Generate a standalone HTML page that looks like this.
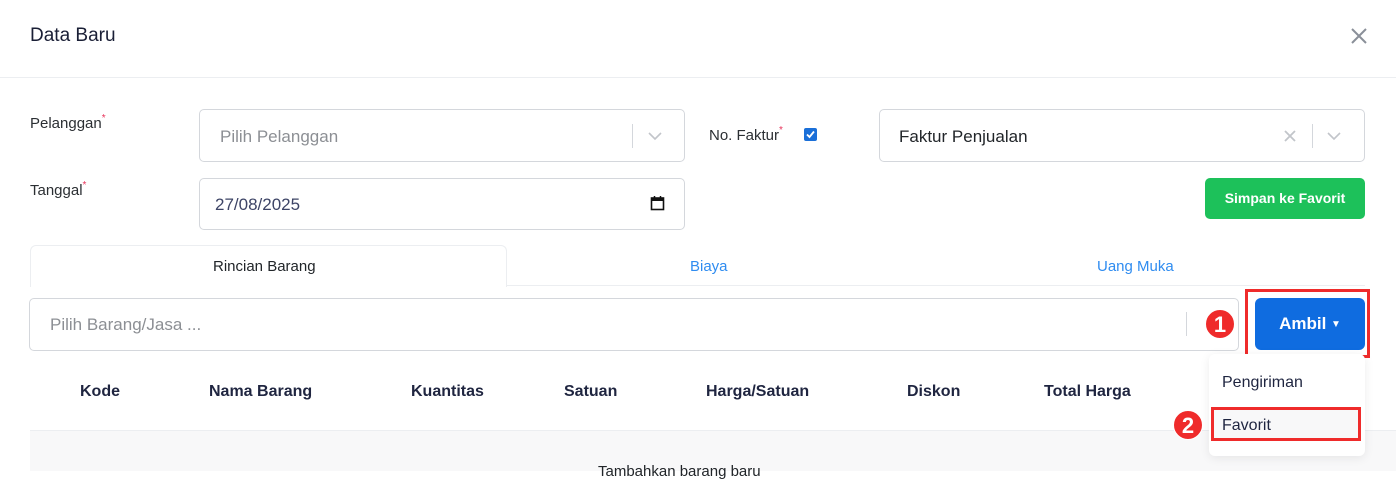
<!DOCTYPE html>
<html><head><style>
*{box-sizing:border-box;margin:0;padding:0}
body{width:1396px;height:471px;overflow:hidden;background:#fff;font-family:"Liberation Sans",sans-serif;position:relative;color:#212529}
.a{position:absolute}
.lbl{font-size:15px;color:#2b2f33}
.req{color:#e8335a;font-size:10px;vertical-align:top;position:relative;top:-2px}
.inp{border:1px solid #d4d7dc;border-radius:5px;background:#fff}
.th{font-size:16px;font-weight:bold;color:#1f2540;top:383px}
.badge{width:30px;height:30px;border-radius:50%;background:#ef2b2b;color:#fff;font-weight:bold;font-size:22px;text-align:center;line-height:30px;border:1px solid #fff}
</style></head><body>
<div class="a" style="left:30px;top:25px;font-size:19px;color:#1a1f36">Data Baru</div>
<svg class="a" style="left:1351px;top:28px" width="16" height="16"><path d="M1 1L15 15M15 1L1 15" stroke="#8a8f99" stroke-width="2"/></svg>
<div class="a" style="left:0;top:77px;width:1396px;height:1px;background:#eceef1"></div>

<div class="a lbl" style="left:30px;top:115px">Pelanggan<span class="req">*</span></div>
<div class="a inp" style="left:199px;top:109px;width:486px;height:53px"></div>
<div class="a" style="left:220px;top:127px;font-size:17px;color:#8c8f94">Pilih Pelanggan</div>
<div class="a" style="left:632px;top:124px;width:1px;height:24px;background:#d4d7dc"></div>
<svg class="a" style="left:647px;top:131px" width="16" height="10"><path d="M2 2L8 8L14 2" stroke="#c2c5ca" stroke-width="1.6" fill="none"/></svg>

<div class="a lbl" style="left:30px;top:182px">Tanggal<span class="req">*</span></div>
<div class="a inp" style="left:199px;top:178px;width:486px;height:52px"></div>
<div class="a" style="left:215px;top:195px;font-size:17px;color:#3d4466">27/08/2025</div>
<svg class="a" style="left:650px;top:195px" width="15" height="16"><rect x="1.5" y="3" width="12" height="11.5" fill="none" stroke="#111" stroke-width="1.6"/><rect x="1.5" y="3" width="12" height="3" fill="#111"/><path d="M4.5 1v3M10.5 1v3" stroke="#111" stroke-width="1.5"/></svg>

<div class="a lbl" style="left:709px;top:127px">No. Faktur<span class="req">*</span></div>
<div class="a" style="left:804px;top:128px;width:13px;height:13px;background:#1a6fd8;border-radius:2px"></div>
<svg class="a" style="left:804px;top:128px" width="13" height="13"><path d="M3 6.5L5.5 9L10 3.5" stroke="#fff" stroke-width="1.8" fill="none"/></svg>
<div class="a inp" style="left:879px;top:109px;width:486px;height:53px"></div>
<div class="a" style="left:899px;top:127px;font-size:17px;color:#212529">Faktur Penjualan</div>
<svg class="a" style="left:1284px;top:130px" width="12" height="12"><path d="M1 1L11 11M11 1L1 11" stroke="#c2c5ca" stroke-width="1.8"/></svg>
<div class="a" style="left:1312px;top:124px;width:1px;height:24px;background:#d4d7dc"></div>
<svg class="a" style="left:1326px;top:131px" width="16" height="10"><path d="M2 2L8 8L14 2" stroke="#c2c5ca" stroke-width="1.6" fill="none"/></svg>

<div class="a" style="left:1205px;top:178px;width:160px;height:41px;background:#1dc15a;border-radius:5px;color:#fff;font-weight:bold;font-size:14px;text-align:center;line-height:41px">Simpan ke Favorit</div>

<div class="a" style="left:30px;top:245px;width:477px;height:42px;border:1px solid #eceef1;border-bottom:none;border-radius:6px 6px 0 0;background:#fff"></div>
<div class="a" style="left:507px;top:285px;width:858px;height:1px;background:#eceef1"></div>
<div class="a" style="left:213px;top:258px;font-size:15px;color:#212529">Rincian Barang</div>
<div class="a" style="left:690px;top:258px;font-size:15px;color:#2f8cf0">Biaya</div>
<div class="a" style="left:1097px;top:258px;font-size:15px;color:#2f8cf0">Uang Muka</div>

<div class="a inp" style="left:29px;top:298px;width:1210px;height:53px"></div>
<div class="a" style="left:50px;top:315px;font-size:17px;color:#8c8f94">Pilih Barang/Jasa ...</div>
<div class="a" style="left:1186px;top:312px;width:1px;height:24px;background:#d4d7dc"></div>

<div class="a" style="left:1245px;top:289px;width:125px;height:69px;border:3px solid #ef2b2b;background:#fff"></div>
<div class="a" style="left:1255px;top:298px;width:110px;height:52px;background:#0f6ce0;border-radius:6px;color:#fff;font-weight:bold;font-size:17px;line-height:52px;text-align:center">Ambil <span style="font-size:10px;vertical-align:2px">▼</span></div>
<div class="a badge" style="left:1205px;top:309px">1</div>

<div class="a th" style="left:80px">Kode</div>
<div class="a th" style="left:209px">Nama Barang</div>
<div class="a th" style="left:411px">Kuantitas</div>
<div class="a th" style="left:564px">Satuan</div>
<div class="a th" style="left:706px">Harga/Satuan</div>
<div class="a th" style="left:907px">Diskon</div>
<div class="a th" style="left:1044px">Total Harga</div>

<div class="a" style="left:30px;top:430px;width:1366px;height:41px;background:#f8f8f9;border-top:1px solid #eceef1"></div>
<div class="a" style="left:598px;top:463px;font-size:15px;color:#212529">Tambahkan barang baru</div>

<div class="a" style="left:1209px;top:354px;width:156px;height:102px;background:#fff;border-radius:6px;box-shadow:0 2px 10px rgba(0,0,0,.08)"></div>
<div class="a" style="left:1222px;top:374px;font-size:16px;color:#1f2540">Pengiriman</div>
<div class="a" style="left:1211px;top:407px;width:150px;height:34px;border:3px solid #ef2b2b;background:#f8f8f9"></div>
<div class="a" style="left:1222px;top:417px;font-size:16px;color:#1f2540">Favorit</div>
<div class="a badge" style="left:1173px;top:410px">2</div>
</body></html>
